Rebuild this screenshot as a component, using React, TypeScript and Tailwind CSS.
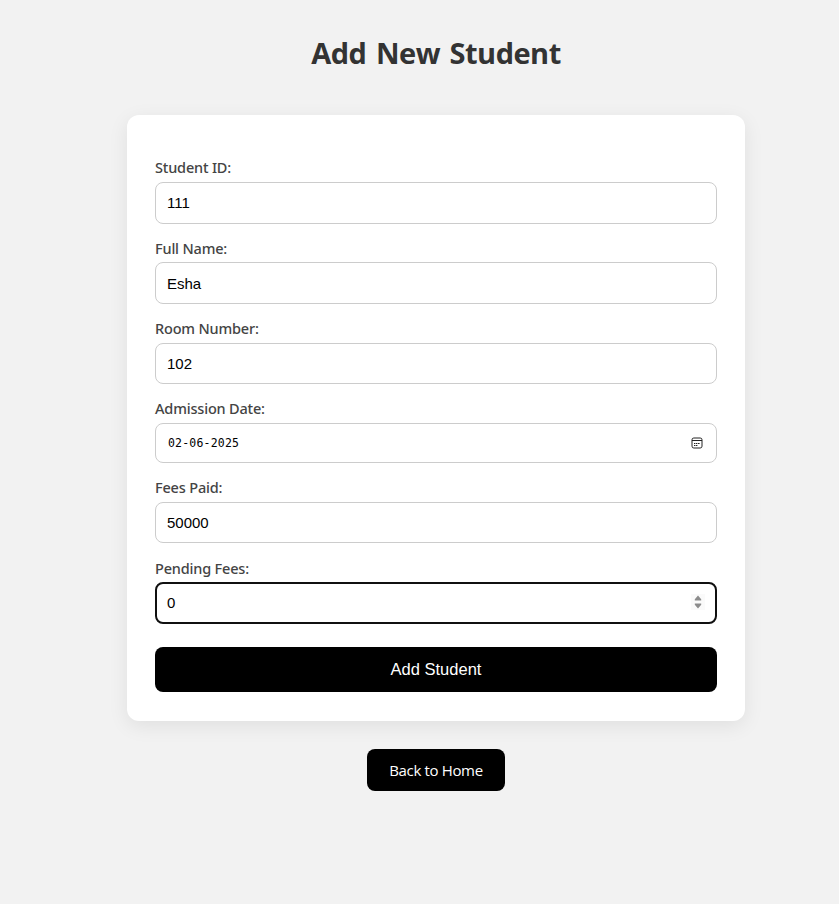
import React from 'react';

type FieldProps = {
  label: string;
  value: string;
  labelClass: string;
  boxClass: string;
  valueClass?: string;
  children?: React.ReactNode;
};

function Field({ label, value, labelClass, boxClass, valueClass = 'text-[15px]', children }: FieldProps) {
  return (
    <div className="flex flex-col">
      <label className={`${labelClass} font-['Noto_Sans','Open_Sans',sans-serif] text-[14.5px] leading-5 font-medium tracking-[-0.18px] whitespace-nowrap text-[#444]`}>{label}</label>
      <div className={`${boxClass} flex items-center justify-between rounded-lg bg-white text-black`}>
        <span className={`${valueClass} font-['Liberation_Sans',Arial,sans-serif]`}>{value}</span>
        {children}
      </div>
    </div>
  );
}

function CalendarIcon() {
  return (
    <svg className="mr-[13px] h-[12px] w-[12px]" viewBox="0 0 12 12" fill="none" stroke="#222">
      <rect x="1" y="1" width="10" height="10" rx="1.8" strokeWidth="1" />
      <path d="M1 3.5h10" strokeWidth="1" />
      <path d="M3 6.5h1.4M5 6.5h1.4M7 6.5h1.6M3 8.5h1.4M5 8.5h1.4" strokeWidth="1" />
    </svg>
  );
}

function Stepper() {
  return (
    <svg className="mr-[10px] mb-[2px] h-4 w-[14px]" viewBox="0 0 14 16">
      <rect width="14" height="16" fill="#fafafa" />
      <path d="M7 1.5 10.2 5.2V6.6H3.8V5.2ZM7 14.5 10.2 10.8V9.4H3.8v1.4Z" fill="#8b8b8b" />
    </svg>
  );
}

export default function App() {
  return (
    <main className="flex h-[904px] w-[839px] flex-col bg-[#f2f2f2] pl-[127px] font-['Open_Sans',sans-serif]">
      <h1 className="mt-[30px] h-[45px] w-[618px] text-center text-[29px] leading-[46px] font-bold tracking-[-0.5px] text-[#333] [word-spacing:2.5px]">
        Add New Student
      </h1>
      <form className="mt-10 flex h-[606px] w-[618px] flex-col rounded-xl bg-white px-7 pt-[42px] shadow-[0_5px_20px_rgba(0,0,0,0.08)]">
        <Field label="Student ID:" value="111" labelClass="h-[25px]" boxClass="h-[42px] border border-[#ccc] pl-[11px]" />
        <Field label="Full Name:" value="Esha" labelClass="mt-[14px] h-6" boxClass="h-[42px] border border-[#ccc] pt-[2px] pl-[11px]" />
        <Field label="Room Number:" value="102" labelClass="mt-[14px] h-[25px]" boxClass="h-[41px] border border-[#ccc] pt-[2px] pl-[11px]" />
        <Field
          label="Admission Date:"
          value="02-06-2025"
          labelClass="mt-[14px] h-[25px]"
          boxClass="h-10 border border-[#ccc] pl-[12px]"
          valueClass="pt-[2px] text-[11.5px] tracking-[0.2px] font-['DejaVu_Sans_Mono',monospace]!"
        >
          <CalendarIcon />
        </Field>
        <Field label="Fees Paid:" value="50000" labelClass="mt-[14px] h-[25px]" boxClass="h-[41px] border border-[#ccc] pt-[2px] pl-[11px]" />
        <Field label="Pending Fees:" value="0" labelClass="mt-[15px] h-6" boxClass="h-[42px] border-2 border-[#101010] pl-[10px]">
          <Stepper />
        </Field>
        <button type="button" className="mt-[23px] h-[45px] rounded-lg bg-black font-['Liberation_Sans',Arial,sans-serif] text-[16.5px] text-white">
          Add Student
        </button>
      </form>
      <a className="mt-7 ml-[240px] flex h-[42px] w-[138px] items-center justify-center rounded-lg bg-black text-[15px] tracking-[-0.35px] whitespace-nowrap text-white">
        Back to Home
      </a>
    </main>
  );
}
